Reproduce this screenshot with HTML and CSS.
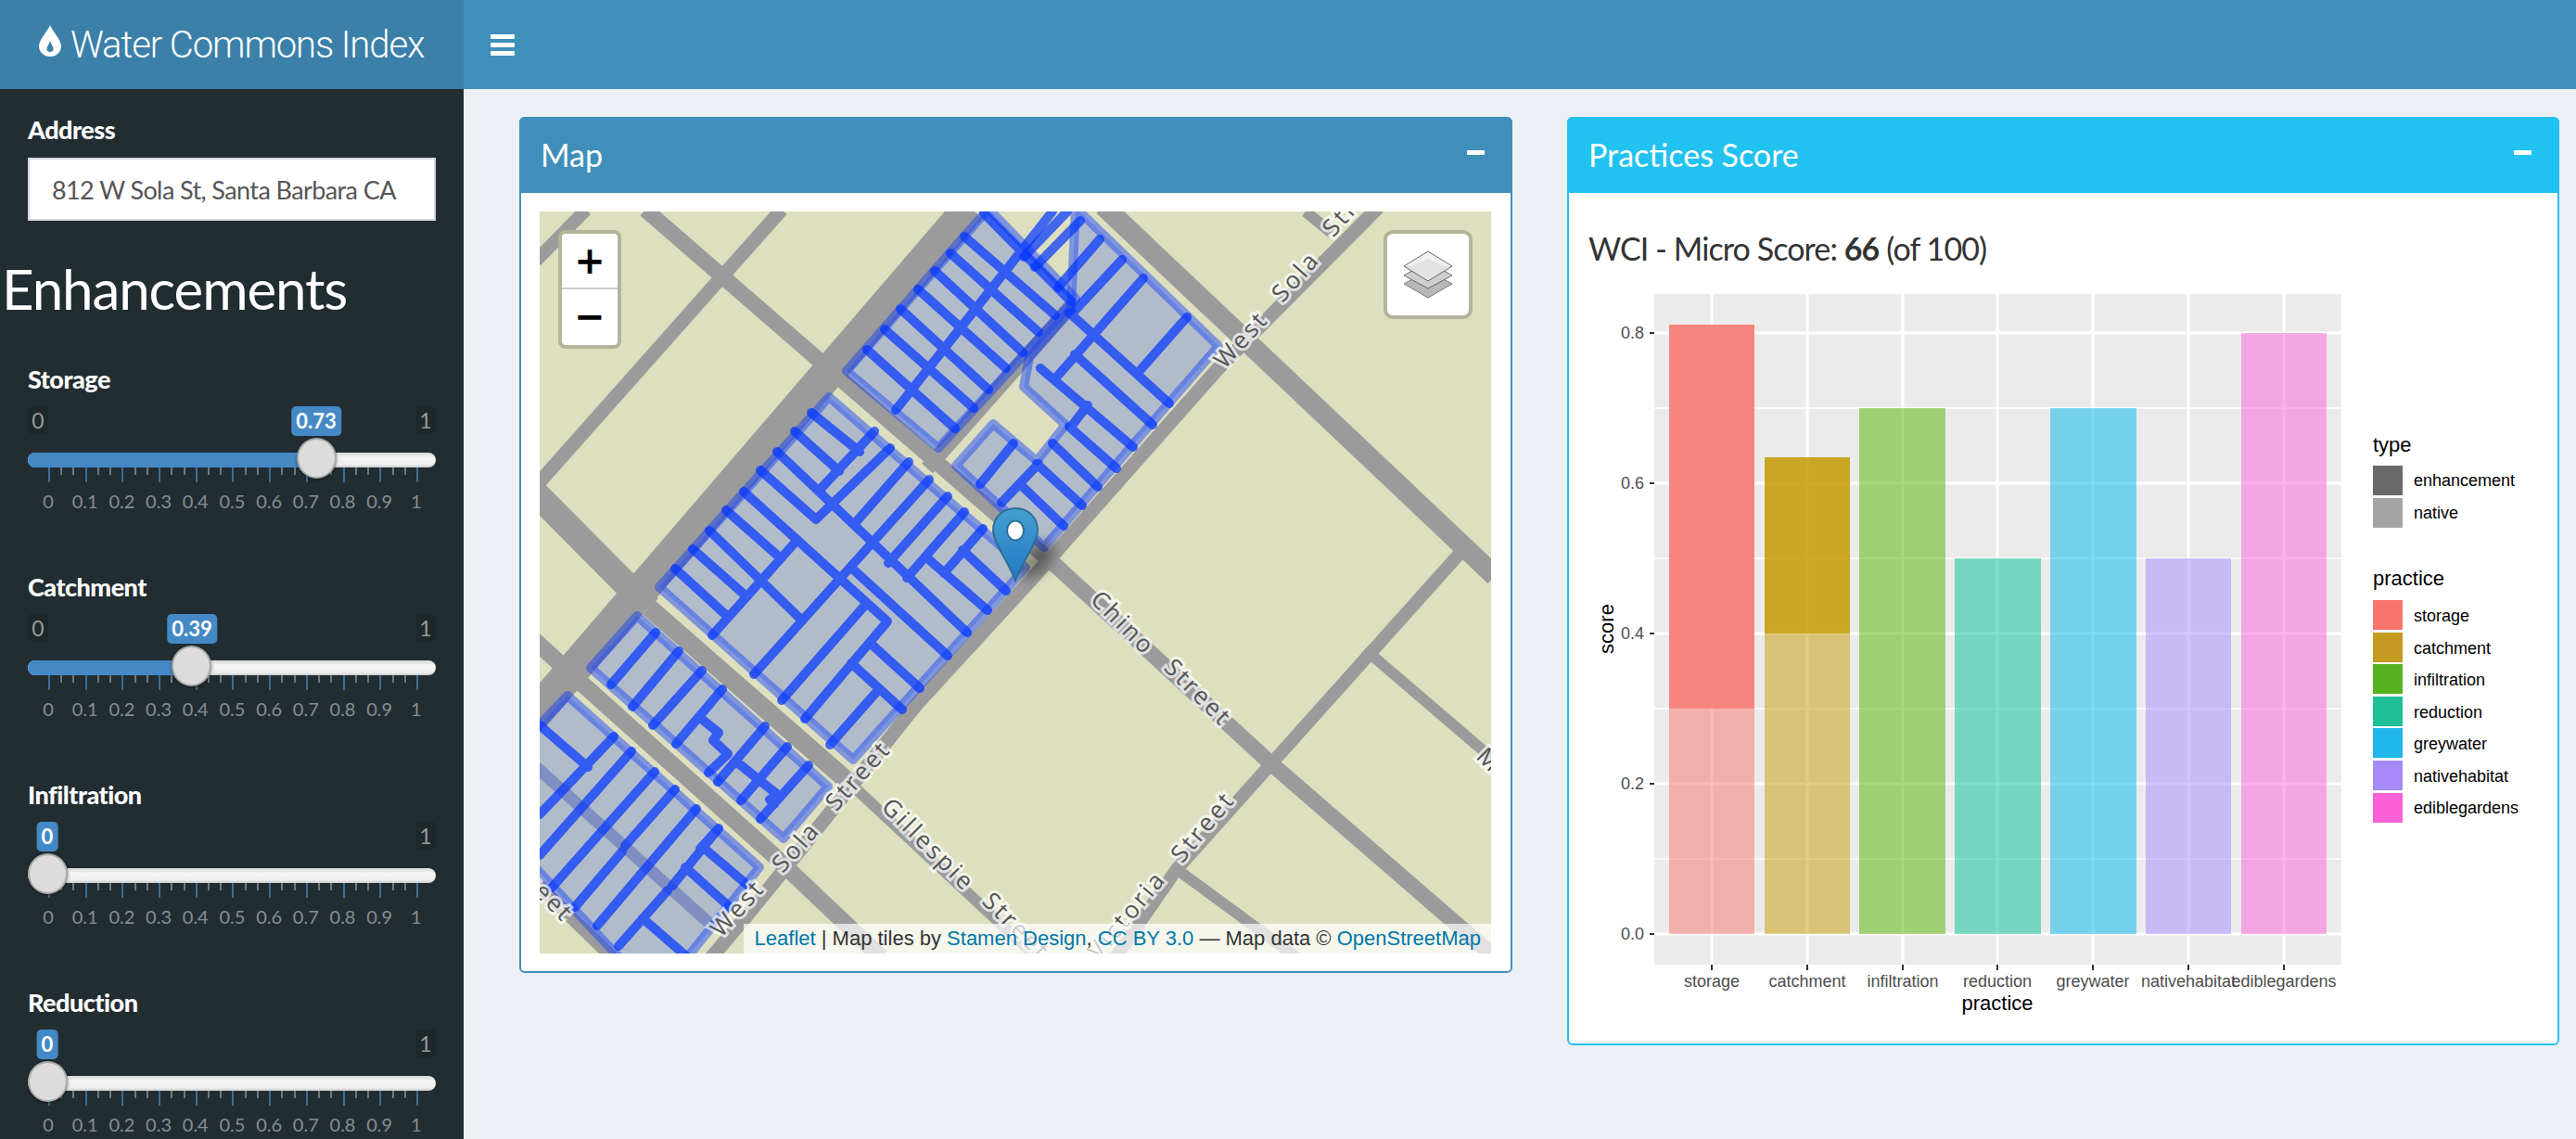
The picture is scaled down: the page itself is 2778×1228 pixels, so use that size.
FILE: index.html
```html
<!DOCTYPE html>
<html lang="en">
<head>
  <meta charset="UTF-8">
  <title>Water Commons Index</title>
  <link rel="stylesheet" href="styles.css">
</head>
<body>
  <header class="top">
    <div class="logo">
      <svg class="drop" viewBox="0 0 24 34">
        <path fill-rule="evenodd" fill="#fff" d="M12 0C13 5 24 15 24 23A12 11 0 0 1 0 23C0 15 11 5 12 0ZM12 17C11.500 20 8.500 23 8.500 25.500A3.500 3.500 0 0 0 15.500 25.500C15.500 23 12.500 20 12 17Z"/>
      </svg>
      <span>Water Commons Index</span>
    </div>
    <nav class="navbar">
      <div class="burger"><i></i><i></i><i></i></div>
    </nav>
  </header>

  <div class="page">
    <aside class="sidebar">
      <div class="address">
        <label>Address</label>
        <input type="text" value="812 W Sola St, Santa Barbara CA">
      </div>
      <h1>Enhancements</h1>

      <div class="group">
        <label>Storage</label>
        <div class="slider">
          <div class="ends"><span>0</span><span>1</span></div>
          <span class="value" style="left: 311px">0.73</span>
          <div class="track"><div class="fill" style="width: 311px"></div></div>
          <span class="handle" style="left: 290px"></span>
          <div class="ticks"></div>
          <div class="scale"><span>0</span><span>0.1</span><span>0.2</span><span>0.3</span><span>0.4</span><span>0.5</span><span>0.6</span><span>0.7</span><span>0.8</span><span>0.9</span><span>1</span></div>
        </div>
      </div>

      <div class="group">
        <label>Catchment</label>
        <div class="slider">
          <div class="ends"><span>0</span><span>1</span></div>
          <span class="value" style="left: 177px">0.39</span>
          <div class="track"><div class="fill" style="width: 176px"></div></div>
          <span class="handle" style="left: 155px"></span>
          <div class="ticks"></div>
          <div class="scale"><span>0</span><span>0.1</span><span>0.2</span><span>0.3</span><span>0.4</span><span>0.5</span><span>0.6</span><span>0.7</span><span>0.8</span><span>0.9</span><span>1</span></div>
        </div>
      </div>

      <div class="group">
        <label>Infiltration</label>
        <div class="slider">
          <div class="ends"><span class="gone">0</span><span>1</span></div>
          <span class="value" style="left: 21px">0</span>
          <div class="track"></div>
          <span class="handle" style="left: 0"></span>
          <div class="ticks"></div>
          <div class="scale"><span>0</span><span>0.1</span><span>0.2</span><span>0.3</span><span>0.4</span><span>0.5</span><span>0.6</span><span>0.7</span><span>0.8</span><span>0.9</span><span>1</span></div>
        </div>
      </div>

      <div class="group">
        <label>Reduction</label>
        <div class="slider">
          <div class="ends"><span class="gone">0</span><span>1</span></div>
          <span class="value" style="left: 21px">0</span>
          <div class="track"></div>
          <span class="handle" style="left: 0"></span>
          <div class="ticks"></div>
          <div class="scale"><span>0</span><span>0.1</span><span>0.2</span><span>0.3</span><span>0.4</span><span>0.5</span><span>0.6</span><span>0.7</span><span>0.8</span><span>0.9</span><span>1</span></div>
        </div>
      </div>
    </aside>

    <main class="content">
      <section class="box box-map">
        <div class="box-header"><h3>Map</h3><span class="collapse"></span></div>
        <div class="box-body">
          <div class="map">
            <svg class="tiles" viewBox="582 228 1026 800">
              <rect x="582" y="228" width="1026" height="800" fill="#dedfbf"/>
              <g class="roads">
                <path stroke-width="14" d="M632 226L578 281"/>
                <path stroke-width="15" d="M843 226L578 524"/>
                <path stroke-width="36" d="M1046 224L575 772"/>
                <path stroke-width="17" d="M696 226L1140 611L1367 820L1612 1032"/>
                <path stroke-width="22" d="M1190 222L1612 621"/>
                <path stroke-width="12" d="M1408 228L1436 251"/>
                <path stroke-width="15" d="M1486 224L1314 397L1112 625L988 760L864 915L803 990L752 1050"/>
                <path stroke-width="14" d="M1582 588L1269 937L1203 1032"/>
                <path stroke-width="12" d="M1472 700L1612 820"/>
                <path stroke-width="12" d="M1269 937L1398 1032"/>
                <path stroke-width="28" d="M576 530L700 655"/>
                <path stroke-width="20" d="M700 655L915 843"/>
                <path stroke-width="12" d="M915 843L1118 1032"/>
                <path stroke-width="18" d="M576 690L622 732L832 920L950 1032"/>
                <path stroke-width="14" d="M576 950L660 1032"/>
                <path stroke-width="16" d="M1000 505L1155 330"/>
              </g>

              <g class="parcels">
                <path d="M913 400L1066 225L1160 322L1012 483Z"/>
                <path d="M1155 333L1110 385L1104 417L1149 458L1118 497L1071 457L1031 502L1126 590L1314 373L1160 224Z"/>
                <path d="M894 428L1106 612L920 819L711 633Z"/>
                <path d="M687 664L893 848L845 904L637 720Z"/>
                <path d="M612 750L819 935L735 1040H675L572 930V792Z"/>
              </g>
              <path class="seam" d="M575 824L770 1000"/>

              <path class="lots" d="M935 377L1030 462M954 355L1050 440M971 333L1066 420M990 312L1085 397M1008 292L1103 380M1025 273L1120 358M1040 255L1138 340M1061 230L1155 325M966 442L1135 228"/>
              <path class="lots" d="M1116 288L1165 238M1141 310L1186 258M1157 337L1210 280M1139 407L1233 300M1227 402L1280 342M1155 460L1173 437M1080 542L1120 500M1057 522L1093 478M1104 277L1151 228M1153 337L1261 435M1159 382L1243 458M1122 397L1222 482M1153 460L1204 505M1135 478L1184 525M1118 500L1167 545M1100 522L1147 567"/>
              <path class="lots" d="M875 445L927 487M857 465L905 508M838 487L1043 682M820 507L880 560L960 483M802 530L957 670L868 775M918 612L1022 707M783 550L842 602M765 572L863 667M747 592L805 643M728 613L785 665M998 600L1065 658M1038 593L1085 637M938 693L992 742M918 715L973 765M943 465L885 527M980 498L923 563M1002 517L813 727M1022 535L958 607M1040 552L978 623M1060 570L1018 618M860 582L768 685M935 650L843 755M948 743L895 803"/>
              <path class="lots" d="M707 682L659 738M732 702L682 762M757 723L704 782M779 743L729 802M754 773L775 790L769 798L785 813L764 833M825 783L774 843M849 805L799 863M872 825L820 883M792 822L799 825L815 838L839 857L830 862L835 867"/>
              <path class="lots" d="M582 782L634 827M662 794L582 878M681 810L582 922M706 832L595 957M728 851L674 912M671 918L620 978M751 872L644 998M775 893L725 955M775 893L755 915M760 915L807 955M739 935L787 978M720 960L667 1020M693 990L739 1030"/>

              <g class="labels">
                <text transform="translate(1345 372) rotate(-48)">West</text>
                <text transform="translate(1404 304) rotate(-48)">Sola</text>
                <text transform="translate(1468 223) rotate(-48)">Street</text>
                <text transform="translate(1205 678) rotate(45)">Chino</text>
                <text transform="translate(1286 753) rotate(45)">Street</text>
                <text transform="translate(932 842) rotate(-48)">Street</text>
                <text transform="translate(865 919) rotate(-48)">Sola</text>
                <text transform="translate(802 985) rotate(-48)">West</text>
                <text transform="translate(995 917) rotate(45)">Gillespie</text>
                <text transform="translate(1090 1005) rotate(45)">Street</text>
                <text transform="translate(1304 897) rotate(-50)">Street</text>
                <text transform="translate(1222 992) rotate(-50)">Victoria</text>
                <text transform="translate(1600 826) rotate(45)">M</text>
                <text transform="translate(576 964) rotate(45)">Street</text>
              </g>

              <ellipse class="shadow" cx="1118" cy="604" rx="24" ry="13" transform="rotate(-45 1118 604)"/>
              <defs>
                <linearGradient id="pin" x1="0" y1="0" x2="0" y2="1">
                  <stop offset="0" stop-color="#469fd2"/>
                  <stop offset="1" stop-color="#2078c4"/>
                </linearGradient>
              </defs>
              <path fill="url(#pin)" stroke="#2e6f96" stroke-width="2" d="M1095 626C1090 610 1071 585 1071 572C1071 557 1082 548 1095 548C1108 548 1119 557 1119 572C1119 585 1100 610 1095 626Z"/>
              <ellipse cx="1095" cy="572" rx="9" ry="10.500" fill="#fff" stroke="#2e6f96" stroke-width="2"/>
            </svg>

            <div class="zoom-ctl">
              <span>+</span>
              <span>&minus;</span>
            </div>
            <div class="layers-ctl">
              <svg viewBox="0 0 54 52" width="54" height="52">
                <path fill="#b8b8b8" stroke="#777" d="M27 22L53 36L27 51L1 36Z"/>
                <path fill="#cfcfcf" stroke="#666" d="M27 12L53 27L27 41L1 27Z"/>
                <path fill="#e2e2e2" stroke="#666" d="M27 1L53 17L27 33L1 17Z"/>
                <path fill="#f1f1f1" d="M27 2L52 17L45 17L27 9L9 17L2 17Z"/>
              </svg>
            </div>
            <div class="attribution">
              <a>Leaflet</a> | Map tiles by <a>Stamen Design</a>, <a>CC BY 3.0</a> &mdash; Map data &copy; <a>OpenStreetMap</a>
            </div>
          </div>
        </div>
      </section>

      <section class="box box-score">
        <div class="box-header"><h3>Practices Score</h3><span class="collapse"></span></div>
        <div class="box-body">
          <h4>WCI - Micro Score: <b>66</b> (of 100)</h4>
          <svg class="plot" viewBox="1692 296 1066 829">
            <rect x="1784" y="317" width="741" height="723" fill="#ebebeb"/>
            <g class="grid-minor">
              <path d="M1784 926H2525M1784 764H2525M1784 602H2525M1784 440H2525"/>
            </g>
            <g class="grid-major">
              <path d="M1784 1007H2525M1784 845H2525M1784 683H2525M1784 521H2525M1784 359H2525"/>
              <path d="M1846 317V1040M1949 317V1040M2052 317V1040M2154 317V1040M2257 317V1040M2360 317V1040M2463 317V1040"/>
            </g>

            <rect x="1800" y="764" width="92" height="243" fill="#f8766d" fill-opacity=".5"/>
            <rect x="1800" y="350" width="92" height="414" fill="#f8766d" fill-opacity=".88"/>
            <rect x="1903" y="683" width="92" height="324" fill="#c49a00" fill-opacity=".5"/>
            <rect x="1903" y="493" width="92" height="190" fill="#c49a00" fill-opacity=".85"/>
            <rect x="2005" y="440" width="93" height="567" fill="#53b400" fill-opacity=".5"/>
            <rect x="2108" y="602" width="93" height="405" fill="#00c094" fill-opacity=".5"/>
            <rect x="2211" y="440" width="93" height="567" fill="#00b6eb" fill-opacity=".5"/>
            <rect x="2314" y="602" width="92" height="405" fill="#a58aff" fill-opacity=".5"/>
            <rect x="2417" y="359" width="92" height="648" fill="#fb61d7" fill-opacity=".5"/>

            <path class="tick" d="M1779 359H1784M1779 521H1784M1779 683H1784M1779 845H1784M1779 1007H1784"/>
            <path class="tick" d="M1846 1040V1046M1949 1040V1046M2052 1040V1046M2154 1040V1046M2257 1040V1046M2360 1040V1046M2463 1040V1046"/>
            <g class="axis-y">
              <text x="1773" y="365">0.8</text>
              <text x="1773" y="527">0.6</text>
              <text x="1773" y="689">0.4</text>
              <text x="1773" y="851">0.2</text>
              <text x="1773" y="1013">0.0</text>
            </g>
            <g class="axis-x">
              <text x="1846" y="1064">storage</text>
              <text x="1949" y="1064">catchment</text>
              <text x="2052" y="1064">infiltration</text>
              <text x="2154" y="1064">reduction</text>
              <text x="2257" y="1064">greywater</text>
              <text x="2360" y="1064">nativehabitat</text>
              <text x="2463" y="1064">ediblegardens</text>
            </g>
            <text class="axis-title" x="2154" y="1089">practice</text>
            <text class="axis-title" transform="translate(1740 678) rotate(-90)">score</text>

            <text class="legend-title" x="2559" y="487">type</text>
            <rect x="2559" y="502" width="32" height="32" fill="#696969"/>
            <rect x="2559" y="537" width="32" height="32" fill="#a5a5a5"/>
            <text class="legend-text" x="2603" y="524">enhancement</text>
            <text class="legend-text" x="2603" y="559">native</text>

            <text class="legend-title" x="2559" y="631">practice</text>
            <rect x="2559" y="647" width="32" height="32" fill="#f8766d"/>
            <rect x="2559" y="682" width="32" height="32" fill="#c49a20"/>
            <rect x="2559" y="716" width="32" height="32" fill="#56b31f"/>
            <rect x="2559" y="751" width="32" height="32" fill="#1fbf95"/>
            <rect x="2559" y="785" width="32" height="32" fill="#1fb6ea"/>
            <rect x="2559" y="820" width="32" height="32" fill="#a58af8"/>
            <rect x="2559" y="855" width="32" height="32" fill="#fb61d7"/>
            <text class="legend-text" x="2603" y="670">storage</text>
            <text class="legend-text" x="2603" y="705">catchment</text>
            <text class="legend-text" x="2603" y="739">infiltration</text>
            <text class="legend-text" x="2603" y="774">reduction</text>
            <text class="legend-text" x="2603" y="808">greywater</text>
            <text class="legend-text" x="2603" y="843">nativehabitat</text>
            <text class="legend-text" x="2603" y="877">ediblegardens</text>
          </svg>
        </div>
      </section>
    </main>
  </div>
</body>
</html>
```

FILE: styles.css
```css
* {
  box-sizing: border-box;
}
html, body {
  height: 100%;
}
body {
  margin: 0;
  overflow: hidden;
  background: #ecf0f5;
  color: #333;
  font-family: Lato, "Open Sans", sans-serif;
  font-size: 28px;
}

/* top bar */
.top {
  display: flex;
  height: 96px;
}
.logo {
  width: 500px;
  display: flex;
  align-items: center;
  gap: 10px;
  padding-left: 42px;
  background: #3b80a9;
  color: #fff;
  font-family: Roboto, sans-serif;
  font-weight: 300;
  font-size: 40px;
  letter-spacing: -1.1px;
}
.drop {
  width: 24px;
  height: 34px;
  margin-top: -8px;
}
.navbar {
  flex: 1;
  display: flex;
  align-items: center;
  padding-left: 29px;
  background: #408fbb;
}
.burger {
  display: flex;
  flex-direction: column;
  gap: 4px;
  width: 26px;
}
.burger i {
  display: block;
  height: 5px;
  border-radius: 1px;
  background: #fff;
}

.page {
  display: flex;
  height: 1132px;
}

/* sidebar */
.sidebar {
  width: 500px;
  flex: none;
  padding-top: 24px;
  overflow: hidden;
  background: #222d32;
  color: #fff;
}
.address, .group {
  padding: 0 30px;
}
.sidebar label {
  display: block;
  height: 40px;
  line-height: 40px;
  font-weight: 900;
  font-size: 27px;
  letter-spacing: -0.5px;
}
.address input {
  display: block;
  width: 440px;
  height: 68px;
  margin-top: 10px;
  padding: 0 24px;
  border: 2px solid #d2d6de;
  background: #fff;
  color: #555;
  font-family: inherit;
  font-size: 27px;
  letter-spacing: -0.6px;
}
.sidebar h1 {
  margin: 40px 0 45px 2px;
  height: 66px;
  line-height: 66px;
  font-weight: 400;
  font-size: 60px;
  letter-spacing: -1.100px;
}
.group {
  height: 224px;
}
.slider {
  position: relative;
  margin-top: 9px;
}
.ends {
  display: flex;
  justify-content: space-between;
  height: 30px;
}
.ends span {
  width: 22px;
  border-radius: 4px;
  background: #1e272b;
  color: #999;
  text-align: center;
  line-height: 30px;
  font-size: 23px;
}
.ends .gone {
  visibility: hidden;
}
.value {
  position: absolute;
  top: 0;
  height: 32px;
  padding: 0 5px;
  transform: translateX(-50%);
  border-radius: 5px;
  background: #4489c6;
  color: #fff;
  line-height: 32px;
  font-weight: 700;
  font-size: 22px;
}
.track {
  height: 16px;
  margin-top: 20px;
  border-radius: 8px;
  overflow: hidden;
  background: linear-gradient(#d8d8d8, #f4f4f4 35%, #eee 80%, #ccc);
}
.fill {
  height: 100%;
  background: #4489c6;
}
.handle {
  position: absolute;
  top: 34px;
  width: 43px;
  height: 44px;
  border: 2px solid #aaa;
  border-radius: 50%;
  background: #dcdcdc;
  box-shadow: 0 1px 3px rgba(0, 0, 0, .5);
}
.ticks {
  width: 399px;
  height: 16px;
  margin-left: 22px;
  background:
    repeating-linear-gradient(90deg, #3d6d94 0 2px, transparent 2px 39.700px) 0 0 / 100% 16px no-repeat,
    repeating-linear-gradient(90deg, #6e787d 0 2px, transparent 2px 13.233px) 0 0 / 100% 8px no-repeat;
}
.scale {
  display: flex;
  justify-content: space-between;
  width: 397px;
  height: 24px;
  margin: 8px 0 0 22px;
  color: #848e93;
  font-size: 20px;
  line-height: 24px;
}
.scale span {
  width: 0;
  display: flex;
  justify-content: center;
}

/* boxes */
.content {
  flex: 1;
  display: flex;
  align-items: flex-start;
  gap: 59px;
  padding: 30px 18px 0 60px;
}
.box {
  background: #fff;
  border: 2px solid #408fbb;
  border-radius: 6px;
}
.box-map {
  width: 1071px;
  height: 923px;
}
.box-score {
  width: 1070px;
  height: 1001px;
  border-color: #22c2f0;
}
.box-header {
  display: flex;
  align-items: center;
  justify-content: space-between;
  height: 82px;
  margin: -2px -2px 0;
  padding: 0 30px 0 23px;
  border-radius: 6px 6px 0 0;
  background: #408fbb;
  color: #fff;
}
.box-score .box-header {
  background: #22c2f0;
}
.box-header h3 {
  margin: -2px 0 0;
  font-weight: 400;
  font-size: 34px;
}
.collapse {
  width: 19px;
  height: 5px;
  margin-top: -6px;
  border-radius: 1px;
  background: #fff;
}
.box-map .box-body {
  padding: 20px 0 0 20px;
}

/* map */
.map {
  position: relative;
  width: 1026px;
  height: 800px;
  overflow: hidden;
}
.tiles {
  display: block;
  width: 1026px;
  height: 800px;
}
.roads path {
  fill: none;
  stroke: #9b9b9b;
}
.parcels path {
  fill: rgba(0, 51, 255, .2);
  stroke: rgba(0, 51, 255, .42);
  stroke-width: 10;
  stroke-linejoin: round;
}
.seam {
  fill: none;
  stroke: rgba(0, 30, 170, .28);
  stroke-width: 13;
}
.lots {
  fill: none;
  stroke: #03f;
  stroke-opacity: .7;
  stroke-width: 10;
  stroke-linecap: round;
  stroke-linejoin: round;
}
.labels text {
  fill: #555;
  stroke: rgba(255, 255, 255, .7);
  stroke-width: 6px;
  paint-order: stroke;
  text-anchor: middle;
  font-family: "Open Sans", sans-serif;
  font-size: 26px;
  letter-spacing: 3px;
}
.shadow {
  fill: rgba(0, 0, 0, .4);
  filter: blur(7px);
}
.zoom-ctl {
  position: absolute;
  top: 20px;
  left: 20px;
  width: 68px;
  height: 128px;
  border: 4px solid #b4b49a;
  border-radius: 8px;
  background: #fff;
  color: #000;
  text-align: center;
  font-family: "DejaVu Sans", sans-serif;
  font-weight: 700;
  font-size: 40px;
}
.zoom-ctl span {
  display: block;
  height: 60px;
  line-height: 58px;
}
.zoom-ctl span:first-child {
  border-bottom: 2px solid #ccc;
}
.layers-ctl {
  position: absolute;
  top: 20px;
  right: 20px;
  width: 96px;
  height: 96px;
  display: flex;
  align-items: center;
  justify-content: center;
  border: 4px solid #b4b49a;
  border-radius: 10px;
  background: #fff;
}
.attribution {
  position: absolute;
  right: 0;
  bottom: 0;
  height: 32px;
  padding: 0 11px 0 12px;
  background: rgba(255, 255, 255, .7);
  color: #333;
  white-space: nowrap;
  line-height: 32px;
  font-family: "Liberation Sans", sans-serif;
  font-size: 22px;
}
.attribution a {
  color: #0078a8;
}

/* plot */
.box-score h4 {
  margin: 0;
  padding: 40px 0 8px 21px;
  line-height: 40px;
  font-weight: 400;
  font-size: 34px;
  letter-spacing: -0.9px;
}
.plot {
  display: block;
  width: 1066px;
  height: 829px;
}
.plot text {
  font-family: "Liberation Sans", sans-serif;
}
.grid-major path, .grid-minor path {
  fill: none;
  stroke: #fff;
}
.grid-major path {
  stroke-width: 3;
}
.grid-minor path {
  stroke-width: 1.500;
}
.tick {
  fill: none;
  stroke: #333;
  stroke-width: 2;
}
.axis-y text {
  fill: #4d4d4d;
  font-size: 18px;
  text-anchor: end;
}
.axis-x text {
  fill: #4d4d4d;
  font-size: 18px;
  text-anchor: middle;
}
.axis-title {
  fill: #000;
  font-size: 22px;
  text-anchor: middle;
}
.legend-title {
  fill: #000;
  font-size: 22px;
}
.legend-text {
  fill: #000;
  font-size: 18px;
}
```
